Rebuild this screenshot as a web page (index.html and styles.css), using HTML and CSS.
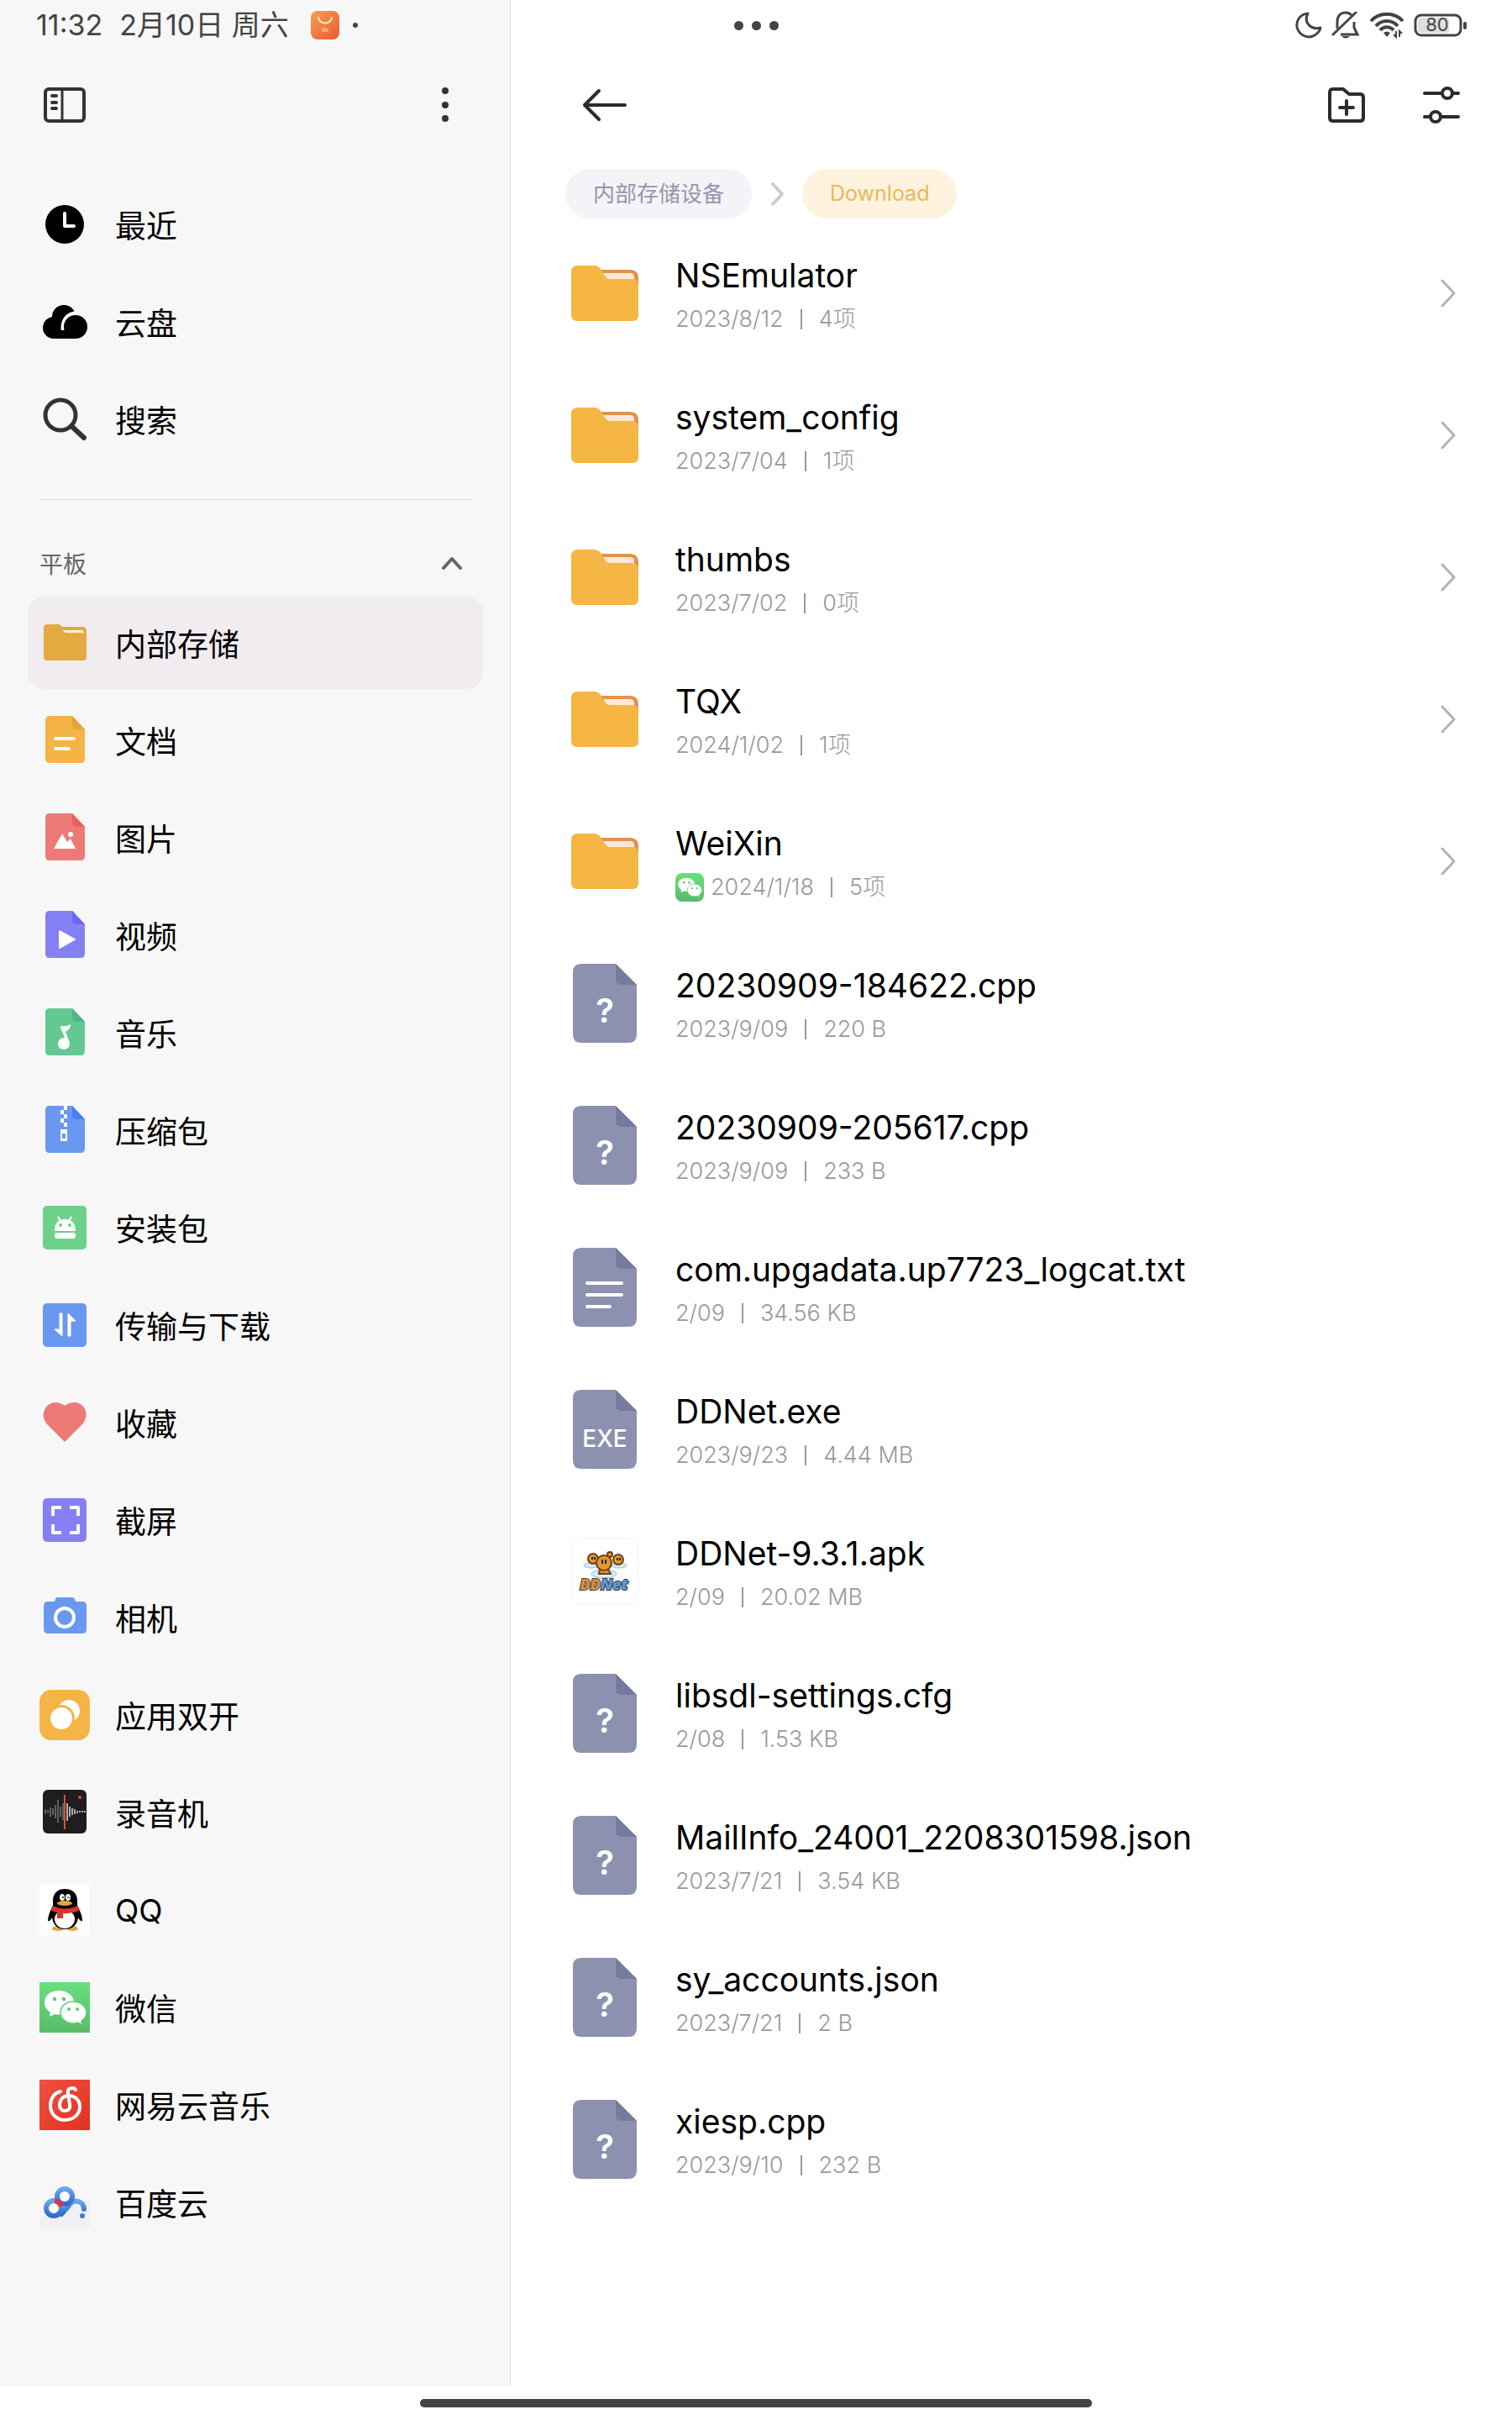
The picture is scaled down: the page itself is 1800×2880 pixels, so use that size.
FILE: index.html
```
<!DOCTYPE html>
<html lang="zh-CN">
<head>
  <meta charset="UTF-8">
  <meta name="viewport" content="width=device-width, initial-scale=1.0">
  <title>文件管理</title>
  <link rel="stylesheet" href="styles.css">
</head>
<body>
  <!-- shared icon shapes -->
  <svg class="sprite" aria-hidden="true">
    <defs>
      <linearGradient id="wx-green" x1="0" y1="0" x2="0" y2="1">
        <stop offset="0" stop-color="#69e07f"/>
        <stop offset="1" stop-color="#58bb69"/>
      </linearGradient>
      <linearGradient id="mi-orange" x1="0" y1="0" x2="1" y2="1">
        <stop offset="0" stop-color="#f6a04e"/>
        <stop offset="1" stop-color="#ec5a35"/>
      </linearGradient>
      <linearGradient id="netease-red" x1="0" y1="0" x2="1" y2="1">
        <stop offset="0" stop-color="#ee5142"/>
        <stop offset="1" stop-color="#e43021"/>
      </linearGradient>
      <linearGradient id="baidu-blue" x1="0" y1="0" x2="0" y2="1">
        <stop offset="0" stop-color="#69a6ef"/>
        <stop offset="1" stop-color="#2f6bcb"/>
      </linearGradient>
    </defs>
    <symbol id="folder" viewBox="0 0 80 68">
      <path d="M28 6H70Q80 6 80 16V40H28Z" fill="#e2924f"/>
      <path d="M34 10H70Q75 10 75 15V22H34Z" fill="#fce8d8"/>
      <path d="M8 1H27Q32 1 35 5L40 13Q42 17 46 17H72Q80 17 80 25V60Q80 67 73 67H7Q0 67 0 60V9Q0 1 8 1Z" fill="#f6b644"/>
    </symbol>
    <symbol id="file" viewBox="0 0 76 94">
      <path d="M10 0H51L76 25V84Q76 94 66 94H10Q0 94 0 84V10Q0 0 10 0Z" fill="#8d91b0"/>
      <path d="M51 0L76 25H58Q51 25 51 18Z" fill="#767a9f"/>
    </symbol>
    <symbol id="doc" viewBox="0 0 60 60">
      <path d="M12 1H39L54 17V52Q54 57 49 57H12Q7 57 7 52V6Q7 1 12 1Z" fill="currentColor"/>
    </symbol>
    <symbol id="wechat" viewBox="0 0 60 60">
      <path d="M23 10C13 10 6 16 6 24C6 30 9 33 13 36L12 41L18 38C33 41 41 33 41 24C41 16 33 10 23 10Z" fill="#fff"/>
      <path d="M40 23C31 23 25 29 25 36C25 43 31 49 40 49Q43 49 46 48L51 51L50 46C53 44 56 40 56 36C56 29 49 23 40 23Z" fill="#fff" stroke="#60cc74" stroke-width="1.5"/>
      <g fill="#5ec672"><circle cx="18" cy="20" r="2.3"/><circle cx="29" cy="20" r="2.3"/><circle cx="35" cy="32" r="2"/><circle cx="45" cy="32" r="2"/></g>
    </symbol>
    <symbol id="arrow" viewBox="0 0 18 34">
      <path d="M2 2L16 17L2 32" fill="none" stroke="#b3b3b3" stroke-width="3" stroke-linecap="round" stroke-linejoin="round"/>
    </symbol>
  </svg>

  <div class="status">
    <div class="status-left">
      <span>11:32</span>
      <span>2月10日 周六</span>
      <svg class="mi-store" viewBox="0 0 34 34">
        <rect width="34" height="34" rx="8" fill="url(#mi-orange)"/>
        <path d="M9 7C9 17 25 17 25 7" fill="none" stroke="#ffe9c8" stroke-width="2"/>
        <path d="M14 25V21H18V25M16 25V22M20 21V25" fill="none" stroke="#fbd0ae" stroke-width="1"/>
      </svg>
      <span class="notice-dot"></span>
    </div>
    <div class="camera-dots"><i></i><i></i><i></i></div>
    <div class="status-right">
      <svg width="32" height="34" viewBox="0 0 32 34">
        <path d="M15 3C5 4 1 12 2 19C4 28 13 33 21 30C26 28 30 23 30 20C20 23 9 15 15 3Z" fill="none" stroke="#444" stroke-width="3" stroke-linejoin="round"/>
      </svg>
      <svg width="34" height="34" viewBox="0 0 34 34">
        <path d="M7 21V13C7 6 11 2 17 2C20 2 22 3 24 5M27 13V20L31 28H11" fill="none" stroke="#444" stroke-width="3"/>
        <path d="M2 28L29 2" stroke="#444" stroke-width="3" stroke-linecap="round"/>
        <path d="M12 30H22Q17 35 12 30Z" fill="#444"/>
      </svg>
      <svg width="42" height="34" viewBox="0 0 42 34">
        <path d="M2 12C12 1 30 1 40 12M8 18C15 10 27 10 34 18M13 23C17 18 25 18 29 23" fill="none" stroke="#444" stroke-width="4"/>
        <path d="M17 26Q21 23 25 26L21 31Z" fill="#444"/>
        <path d="M32 24V31L29 28M36 31V24L39 27" fill="none" stroke="#444" stroke-width="2"/>
      </svg>
      <svg width="64" height="28" viewBox="0 0 64 28">
        <rect x="5" y="5" width="37" height="18" rx="3" fill="#dedede"/>
        <rect x="2" y="2" width="54" height="24" rx="7" fill="none" stroke="#444" stroke-width="3"/>
        <rect x="59" y="10" width="4" height="9" rx="2" fill="#444"/>
        <text x="28" y="21" class="battery-text">80</text>
      </svg>
    </div>
  </div>

  <div class="app">
    <aside class="sidebar">
      <div class="sidebar-head">
        <button type="button" aria-label="收起侧栏">
          <svg width="52" height="44" viewBox="0 0 52 44">
            <rect x="3" y="3" width="46" height="38" rx="4" fill="none" stroke="#333" stroke-width="4"/>
            <path d="M23 3V41" stroke="#333" stroke-width="3"/>
            <path d="M11 11H16M11 19H16M11 26H16" stroke="#333" stroke-width="4" stroke-linecap="round"/>
          </svg>
        </button>
        <button type="button" aria-label="更多">
          <svg width="10" height="44" viewBox="0 0 10 44" fill="#333">
            <circle cx="5" cy="5" r="4"/><circle cx="5" cy="22" r="4"/><circle cx="5" cy="38" r="4"/>
          </svg>
        </button>
      </div>

      <nav class="nav">
        <a href="#recent">
          <svg viewBox="0 0 60 60"><circle cx="30" cy="30" r="23"/><path d="M30 17V32H41" fill="none" stroke="#f7f7f7" stroke-width="4" stroke-linecap="round" stroke-linejoin="round"/></svg>
          最近
        </a>
        <a href="#cloud">
          <svg viewBox="0 0 60 60">
            <circle cx="29" cy="24" r="14"/><circle cx="17" cy="37" r="13"/><path d="M16 24H32V50H16Z"/>
            <path d="M44 20C34 20 28 27 28 38" fill="none" stroke="#f7f7f7" stroke-width="5" stroke-linecap="round"/>
            <circle cx="43" cy="36" r="14"/><path d="M16 40H44V50H16Z"/>
          </svg>
          云盘
        </a>
        <a href="#search">
          <svg viewBox="0 0 60 60" fill="none" stroke="#333" stroke-linecap="round"><circle cx="25" cy="25" r="18" stroke-width="5"/><path d="M38 38L53 52" stroke-width="6"/></svg>
          搜索
        </a>
      </nav>

      <button type="button" class="section" aria-expanded="true">
        平板
        <svg width="26" height="18" viewBox="0 0 26 18"><path d="M3 15L13 4L23 15" fill="none" stroke="#666" stroke-width="4" stroke-linecap="round" stroke-linejoin="round"/></svg>
      </button>

      <nav class="nav">
        <a href="#storage" class="active" aria-current="page">
          <svg viewBox="0 0 60 60"><path d="M9 8H23Q25 8 27 11H51Q56 11 56 16V47Q56 51 52 51H9Q5 51 5 47V12Q5 8 9 8Z" fill="#e3aa42"/><path d="M27 15H50Q53 15 53 19L50 18H31Z" fill="#fdf0d2"/></svg>
          内部存储
        </a>
        <a href="#docs">
          <svg viewBox="0 0 60 60" color="#f4b445"><use href="#doc"/><path d="M39 1L54 17H44Q39 17 39 12Z" fill="#e7a136"/><path d="M19 28H41M19 40H35" stroke="#fff" stroke-width="4" stroke-linecap="round"/></svg>
          文档
        </a>
        <a href="#images">
          <svg viewBox="0 0 60 60" color="#ed7a76"><use href="#doc"/><path d="M39 1L54 17H44Q39 17 39 12Z" fill="#ec5f5f"/><path d="M17 43L27 25L33 35L37 31L43 43Z" fill="#fff"/><circle cx="37" cy="26" r="3" fill="#fff"/></svg>
          图片
        </a>
        <a href="#videos">
          <svg viewBox="0 0 60 60" color="#8480f4"><use href="#doc"/><path d="M39 1L54 17H44Q39 17 39 12Z" fill="#6c66f7"/><path d="M24 25L42 35L24 45Z" fill="#fff" stroke="#fff" stroke-width="2" stroke-linejoin="round"/></svg>
          视频
        </a>
        <a href="#music">
          <svg viewBox="0 0 60 60" color="#63c892"><use href="#doc"/><path d="M39 1L54 17H44Q39 17 39 12Z" fill="#55b381"/><circle cx="29" cy="43" r="7" fill="#fff"/><path d="M25 22Q33 23 37 20Q37 26 31 29L36 42L33 43L25 24Z" fill="#fff"/></svg>
          音乐
        </a>
        <a href="#archives">
          <svg viewBox="0 0 60 60" color="#6a98f1"><use href="#doc"/><path d="M39 1L54 17H44Q39 17 39 12Z" fill="#4a7df3"/><path d="M29 1H33V6H29ZM25 6H29V11H25ZM29 11H33V16H29ZM25 16H29V21H25ZM29 21H33V26H29ZM25 29H33V43H25ZM27 34V40H31V34Z" fill="#fff" fill-rule="evenodd"/></svg>
          压缩包
        </a>
        <a href="#apks">
          <svg viewBox="0 0 60 60"><rect x="4" y="4" width="52" height="52" rx="5" fill="#6dd18a"/><path d="M18 34C18 24 23 20 30 20C38 20 43 24 43 34ZM18 39Q18 36 21 36H40Q43 36 43 39V40Q43 43 40 43H21Q18 43 18 40Z" fill="#fff"/><path d="M22 17L25 22M38 17L35 22" stroke="#fff" stroke-width="2"/><circle cx="25" cy="27" r="2" fill="#6dd18a"/><circle cx="36" cy="27" r="2" fill="#6dd18a"/></svg>
          安装包
        </a>
        <a href="#transfer">
          <svg viewBox="0 0 60 60"><rect x="4" y="4" width="52" height="52" rx="5" fill="#6a98f1"/><path d="M24 16H27V43L18 35H24ZM34 43H37V25H43L34 16Z" fill="#fff" stroke="#fff" stroke-linejoin="round"/></svg>
          传输与下载
        </a>
        <a href="#favorites">
          <svg viewBox="0 0 60 60"><path d="M30 53L9 32C-1 20 8 6 19 6Q25 6 30 10Q35 6 42 6C53 6 61 20 51 32Z" fill="#ed7a76"/></svg>
          收藏
        </a>
        <a href="#screenshots">
          <svg viewBox="0 0 60 60"><rect x="4" y="4" width="52" height="52" rx="5" fill="#8480f4"/><path d="M16 25V15H26M36 15H46V25M46 35V45H36M26 45H16V35" fill="none" stroke="#fff" stroke-width="4" stroke-linejoin="round"/></svg>
          截屏
        </a>
        <a href="#camera">
          <svg viewBox="0 0 60 60"><path d="M21 6H39Q42 6 43 11H51Q56 11 56 16V44Q56 49 51 49H10Q5 49 5 44V16Q5 11 10 11H18Q19 6 21 6Z" fill="#6a98f1"/><circle cx="30" cy="30" r="11" fill="none" stroke="#fff" stroke-width="4"/></svg>
          相机
        </a>
        <a href="#dual">
          <svg viewBox="0 0 60 60"><rect width="60" height="60" rx="14" fill="#f4b546"/><circle cx="35" cy="25" r="13" fill="#fff"/><circle cx="26" cy="34" r="16" fill="#f4b546"/><circle cx="26" cy="34" r="13" fill="#fff"/></svg>
          应用双开
        </a>
        <a href="#recorder">
          <svg viewBox="0 0 60 60"><rect x="4" y="3" width="52" height="52" rx="6" fill="#1e1e1e"/><path d="M7 26V32M10 27V31M13 24V35M16 25V33M19 21V37M22 15V42M25 23V35M28 19V39" stroke="#777" stroke-width="1.5"/><path d="M33 19V40M36 23V35M39 25V33M42 26V32M45 28V31M48 28V30M51 28V30M54 28V30" stroke="#ddd" stroke-width="1.5"/><path d="M30 9V50" stroke="#d9502f" stroke-width="2"/><circle cx="48" cy="12" r="2" fill="#e2492c"/></svg>
          录音机
        </a>
        <a href="#qq">
          <svg viewBox="0 0 60 60">
            <rect width="60" height="60" rx="1" fill="#fff"/>
            <ellipse cx="22" cy="52" rx="7" ry="3" fill="#e5a638"/><ellipse cx="39" cy="52" rx="7" ry="3" fill="#e5a638"/>
            <path d="M30 5C21 5 16 11 16 19V25C12 32 10 38 10 43C12 44 14 41 15 39C16 47 21 53 30 53C40 53 45 47 46 39C47 41 49 44 51 43C51 38 49 32 45 25V19C45 11 40 5 30 5Z"/>
            <ellipse cx="30" cy="41" rx="12" ry="11" fill="#fff"/>
            <path d="M15 25Q30 32 46 25L47 31Q38 35 28 34V40H21V33L14 31Z" fill="#d8352b"/>
            <ellipse cx="27" cy="15" rx="3" ry="4" fill="#fff"/><ellipse cx="34" cy="15" rx="3" ry="4" fill="#fff"/>
            <circle cx="28" cy="15" r="1"/><path d="M33 16Q34 13 36 16" fill="none" stroke="#000"/>
            <ellipse cx="30" cy="22" rx="9" ry="3" fill="#e5a638"/>
          </svg>
          QQ
        </a>
        <a href="#wechat-files">
          <svg viewBox="0 0 60 60"><rect width="60" height="60" fill="url(#wx-green)"/><use href="#wechat"/></svg>
          微信
        </a>
        <a href="#netease">
          <svg viewBox="0 0 60 60"><rect width="60" height="60" fill="url(#netease-red)"/><path d="M25 14C17 16 13 23 13 31C13 41 21 48 30 48C41 48 48 41 48 32C48 24 42 19 35 19C28 19 24 24 24 30C24 35 27 37 30 37C35 37 37 34 36 29L34 17C33 11 36 10 39 10Q42 10 43 12" fill="none" stroke="#fff" stroke-width="4" stroke-linecap="round"/></svg>
          网易云音乐
        </a>
        <a href="#baidu">
          <svg viewBox="0 0 60 60"><path d="M0 48L60 26V60H0Z" fill="#f1f1f3"/><path d="M26 44L35 34C40 25 53 28 53 38" fill="none" stroke="url(#baidu-blue)" stroke-width="6" stroke-linecap="round"/><circle cx="30" cy="23" r="9" fill="#fff" stroke="url(#baidu-blue)" stroke-width="6"/><circle cx="17" cy="37" r="9" fill="#fff" stroke="url(#baidu-blue)" stroke-width="6"/><path d="M18 28Q24 29 26 35" fill="none" stroke="#d33a46" stroke-width="6"/><circle cx="51" cy="46" r="3" fill="#3b7bd6"/></svg>
          百度云
        </a>
      </nav>
    </aside>

    <main class="main">
      <header class="toolbar">
        <button type="button" aria-label="返回">
          <svg width="54" height="44" viewBox="0 0 54 44"><path d="M51 22H3M20 5L3 22L20 39" fill="none" stroke="#2c2c2c" stroke-width="4" stroke-linecap="round" stroke-linejoin="round"/></svg>
        </button>
        <div class="toolbar-actions">
          <button type="button" aria-label="新建文件夹">
            <svg width="44" height="44" viewBox="0 0 44 44" fill="none" stroke="#2c2c2c" stroke-width="4" stroke-linecap="round" stroke-linejoin="round"><path d="M6 3H18L25 9H38Q42 9 42 13V37Q42 41 38 41H6Q2 41 2 37V7Q2 3 6 3ZM22 17V33M14 25H30"/></svg>
          </button>
          <button type="button" aria-label="排序与视图">
            <svg width="44" height="44" viewBox="0 0 44 44" fill="none" stroke="#2c2c2c" stroke-width="4" stroke-linecap="round"><path d="M2 8H22M36 8H42M2 36H8M22 36H42"/><circle cx="29" cy="8" r="6"/><circle cx="15" cy="36" r="6"/></svg>
          </button>
        </div>
      </header>

      <nav class="crumbs" aria-label="路径">
        <a href="#root" class="crumb">内部存储设备</a>
        <svg width="20" height="30" viewBox="0 0 20 30"><path d="M5 3L16 15L5 27" fill="none" stroke="#ccc" stroke-width="4" stroke-linecap="round" stroke-linejoin="round"/></svg>
        <a href="#download" class="crumb current">Download</a>
      </nav>

      <ul class="files">
        <li><a href="#NSEmulator">
          <svg class="folder"><use href="#folder"/></svg>
          <div class="info"><div class="name">NSEmulator</div><div class="meta">2023/8/12<i></i>4项</div></div>
          <svg class="arrow"><use href="#arrow"/></svg>
        </a></li>
        <li><a href="#system_config">
          <svg class="folder"><use href="#folder"/></svg>
          <div class="info"><div class="name">system_config</div><div class="meta">2023/7/04<i></i>1项</div></div>
          <svg class="arrow"><use href="#arrow"/></svg>
        </a></li>
        <li><a href="#thumbs">
          <svg class="folder"><use href="#folder"/></svg>
          <div class="info"><div class="name">thumbs</div><div class="meta">2023/7/02<i></i>0项</div></div>
          <svg class="arrow"><use href="#arrow"/></svg>
        </a></li>
        <li><a href="#TQX">
          <svg class="folder"><use href="#folder"/></svg>
          <div class="info"><div class="name">TQX</div><div class="meta">2024/1/02<i></i>1项</div></div>
          <svg class="arrow"><use href="#arrow"/></svg>
        </a></li>
        <li><a href="#WeiXin">
          <svg class="folder"><use href="#folder"/></svg>
          <div class="info"><div class="name">WeiXin</div><div class="meta"><svg class="app-badge" viewBox="0 0 60 60"><rect width="60" height="60" rx="14" fill="url(#wx-green)"/><use href="#wechat"/></svg>2024/1/18<i></i>5项</div></div>
          <svg class="arrow"><use href="#arrow"/></svg>
        </a></li>
        <li><a href="#f1">
          <svg class="file" viewBox="0 0 76 94"><use href="#file"/><text x="38" y="70" class="unknown">?</text></svg>
          <div class="info"><div class="name">20230909-184622.cpp</div><div class="meta">2023/9/09<i></i>220 B</div></div>
        </a></li>
        <li><a href="#f2">
          <svg class="file" viewBox="0 0 76 94"><use href="#file"/><text x="38" y="70" class="unknown">?</text></svg>
          <div class="info"><div class="name">20230909-205617.cpp</div><div class="meta">2023/9/09<i></i>233 B</div></div>
        </a></li>
        <li><a href="#f3">
          <svg class="file" viewBox="0 0 76 94"><use href="#file"/><path d="M17 42H58M17 56H58M17 70H44" stroke="#fff" stroke-width="4" stroke-linecap="round"/></svg>
          <div class="info"><div class="name">com.upgadata.up7723_logcat.txt</div><div class="meta">2/09<i></i>34.56 KB</div></div>
        </a></li>
        <li><a href="#f4">
          <svg class="file" viewBox="0 0 76 94"><use href="#file"/><text x="38" y="68" class="ext">EXE</text></svg>
          <div class="info"><div class="name">DDNet.exe</div><div class="meta">2023/9/23<i></i>4.44 MB</div></div>
        </a></li>
        <li><a href="#f5">
          <svg class="apk" viewBox="0 0 80 80">
            <rect x="1" y="1" width="78" height="78" rx="12" fill="#fff" stroke="#f3f3f3"/>
            <g fill="#d6ebfa" stroke="#8fc0e6"><ellipse cx="24" cy="33" rx="9" ry="3"/><ellipse cx="57" cy="33" rx="9" ry="3"/><ellipse cx="39" cy="43" rx="15" ry="5"/></g>
            <g fill="#e8962e" stroke="#6b4218" stroke-width="2"><circle cx="46" cy="20" r="3"/><circle cx="26" cy="25" r="6"/><circle cx="56" cy="26" r="6"/><path d="M34 38H44L47 43H33Z"/><circle cx="39" cy="30" r="9"/></g>
            <path d="M37 26V31M41 26V31M25 23V26M28 23V26M55 24V27M58 24V27" stroke="#222" stroke-width="2"/>
            <text x="39" y="62" class="ddnet"><tspan fill="#e0912f">DD</tspan><tspan fill="#5b9bd8">Net</tspan></text>
          </svg>
          <div class="info"><div class="name">DDNet-9.3.1.apk</div><div class="meta">2/09<i></i>20.02 MB</div></div>
        </a></li>
        <li><a href="#f6">
          <svg class="file" viewBox="0 0 76 94"><use href="#file"/><text x="38" y="70" class="unknown">?</text></svg>
          <div class="info"><div class="name">libsdl-settings.cfg</div><div class="meta">2/08<i></i>1.53 KB</div></div>
        </a></li>
        <li><a href="#f7">
          <svg class="file" viewBox="0 0 76 94"><use href="#file"/><text x="38" y="70" class="unknown">?</text></svg>
          <div class="info"><div class="name">MailInfo_24001_2208301598.json</div><div class="meta">2023/7/21<i></i>3.54 KB</div></div>
        </a></li>
        <li><a href="#f8">
          <svg class="file" viewBox="0 0 76 94"><use href="#file"/><text x="38" y="70" class="unknown">?</text></svg>
          <div class="info"><div class="name">sy_accounts.json</div><div class="meta">2023/7/21<i></i>2 B</div></div>
        </a></li>
        <li><a href="#f9">
          <svg class="file" viewBox="0 0 76 94"><use href="#file"/><text x="38" y="70" class="unknown">?</text></svg>
          <div class="info"><div class="name">xiesp.cpp</div><div class="meta">2023/9/10<i></i>232 B</div></div>
        </a></li>
      </ul>
    </main>
  </div>

  <div class="home-bar"><span></span></div>
</body>
</html>
```
FILE: styles.css
```
* {
  box-sizing: border-box;
}
body {
  margin: 0;
  min-height: 100vh;
  display: flex;
  flex-direction: column;
  background: #fff;
  color: #000;
  font-family: Inter, 'Noto Sans CJK SC', sans-serif;
}
a {
  color: inherit;
  text-decoration: none;
}
button {
  display: flex;
  padding: 0;
  border: none;
  background: none;
  font: inherit;
  cursor: pointer;
}
svg {
  display: block;
  flex: none;
}
.sprite {
  position: absolute;
  width: 0;
  height: 0;
}

/* system status bar, lies over both panes */
.status {
  position: absolute;
  top: 0;
  left: 0;
  right: 0;
  height: 60px;
  display: grid;
  grid-template-columns: 1fr auto 1fr;
  align-items: center;
  color: #444;
  font-size: 34px;
  line-height: 60px;
}
.status-left {
  padding-left: 43px;
  display: flex;
  align-items: center;
  gap: 20px;
  white-space: nowrap;
}
.mi-store {
  width: 34px;
  height: 34px;
  margin-left: 6px;
}
.notice-dot {
  width: 6px;
  height: 6px;
  margin-left: -4px;
  border-radius: 50%;
  background: #444;
}
.camera-dots {
  display: flex;
  gap: 10px;
}
.camera-dots i {
  width: 11px;
  height: 11px;
  border-radius: 50%;
  background: #444;
}
.status-right {
  padding-right: 53px;
  display: flex;
  align-items: center;
  justify-content: flex-end;
  gap: 11px;
}
.battery-text {
  font-size: 22px;
  line-height: 22px;
  text-anchor: middle;
  fill: #444;
}

.app {
  flex: 1;
  display: flex;
}

/* sidebar */
.sidebar {
  width: 608px;
  flex: none;
  padding: 60px 32px 0 33px;
  background: #f7f7f7;
  border-right: 1px solid #ddd;
}
.sidebar-head {
  height: 130px;
  margin-bottom: 22px;
  padding: 0 40px 0 18px;
  display: flex;
  align-items: center;
  justify-content: space-between;
}
.nav {
  display: flex;
  flex-direction: column;
  gap: 6px;
}
.nav a {
  height: 110px;
  padding-left: 14px;
  display: flex;
  align-items: center;
  gap: 30px;
  border-radius: 20px;
  font-size: 37px;
}
.nav svg {
  width: 60px;
  height: 60px;
}
.nav .active {
  background: #f0ecef;
}
.section {
  width: calc(100% - 28px);
  height: 116px;
  margin: 40px 14px 0;
  padding: 34px 10px 0 0;
  align-items: center;
  justify-content: space-between;
  border-top: 1px solid #ddd;
  color: #666;
  font-size: 28px;
}

/* file list */
.main {
  flex: 1;
  padding: 60px 0 0 65px;
}
.toolbar {
  height: 130px;
  padding: 0 62px 0 20px;
  display: flex;
  align-items: center;
  justify-content: space-between;
}
.toolbar-actions {
  display: flex;
  gap: 69px;
}
.crumbs {
  height: 74px;
  padding-top: 7px;
  display: flex;
  align-items: center;
  gap: 20px;
  font-size: 26px;
}
.crumb {
  height: 59px;
  padding: 0 33px;
  border-radius: 30px;
  background: #f5f3f8;
  color: #9496ad;
  line-height: 59px;
}
.crumb.current {
  background: #fff2de;
  color: #e9b956;
  font-size: 25px;
}
.files {
  margin: 0;
  padding: 0;
  list-style: none;
}
.files a {
  height: 169px;
  padding: 0 67px 0 7px;
  display: flex;
  align-items: center;
}
.folder {
  width: 80px;
  height: 68px;
}
.file {
  width: 76px;
  height: 94px;
  margin: 0 2px;
}
.apk {
  width: 80px;
  height: 80px;
}
.arrow {
  width: 18px;
  height: 34px;
}
.info {
  flex: 1;
  margin-left: 44px;
  padding-top: 2px;
}
.name {
  font-size: 39px;
  line-height: 60px;
}
.meta {
  height: 44px;
  display: flex;
  align-items: center;
  color: #999;
  font-size: 27px;
  font-weight: 300;
  line-height: 44px;
}
.meta i {
  width: 2px;
  height: 24px;
  margin: 0 20px;
  background: #999;
}
.app-badge {
  width: 34px;
  height: 34px;
  margin-right: 8px;
}
.unknown {
  fill: #fff;
  font-size: 40px;
  font-weight: 600;
  text-anchor: middle;
}
.ext {
  fill: #fff;
  font-size: 28px;
  font-weight: 500;
  text-anchor: middle;
}
.ddnet {
  font-family: 'Open Sans', sans-serif;
  font-size: 18px;
  font-style: italic;
  font-weight: 800;
  text-anchor: middle;
  stroke: #3a3a4a;
  stroke-width: 2px;
  paint-order: stroke;
}

/* gesture bar */
.home-bar {
  height: 40px;
  display: flex;
  justify-content: center;
  align-items: center;
}
.home-bar span {
  width: 800px;
  max-width: 80%;
  height: 10px;
  border-radius: 5px;
  background: #444;
}
```
